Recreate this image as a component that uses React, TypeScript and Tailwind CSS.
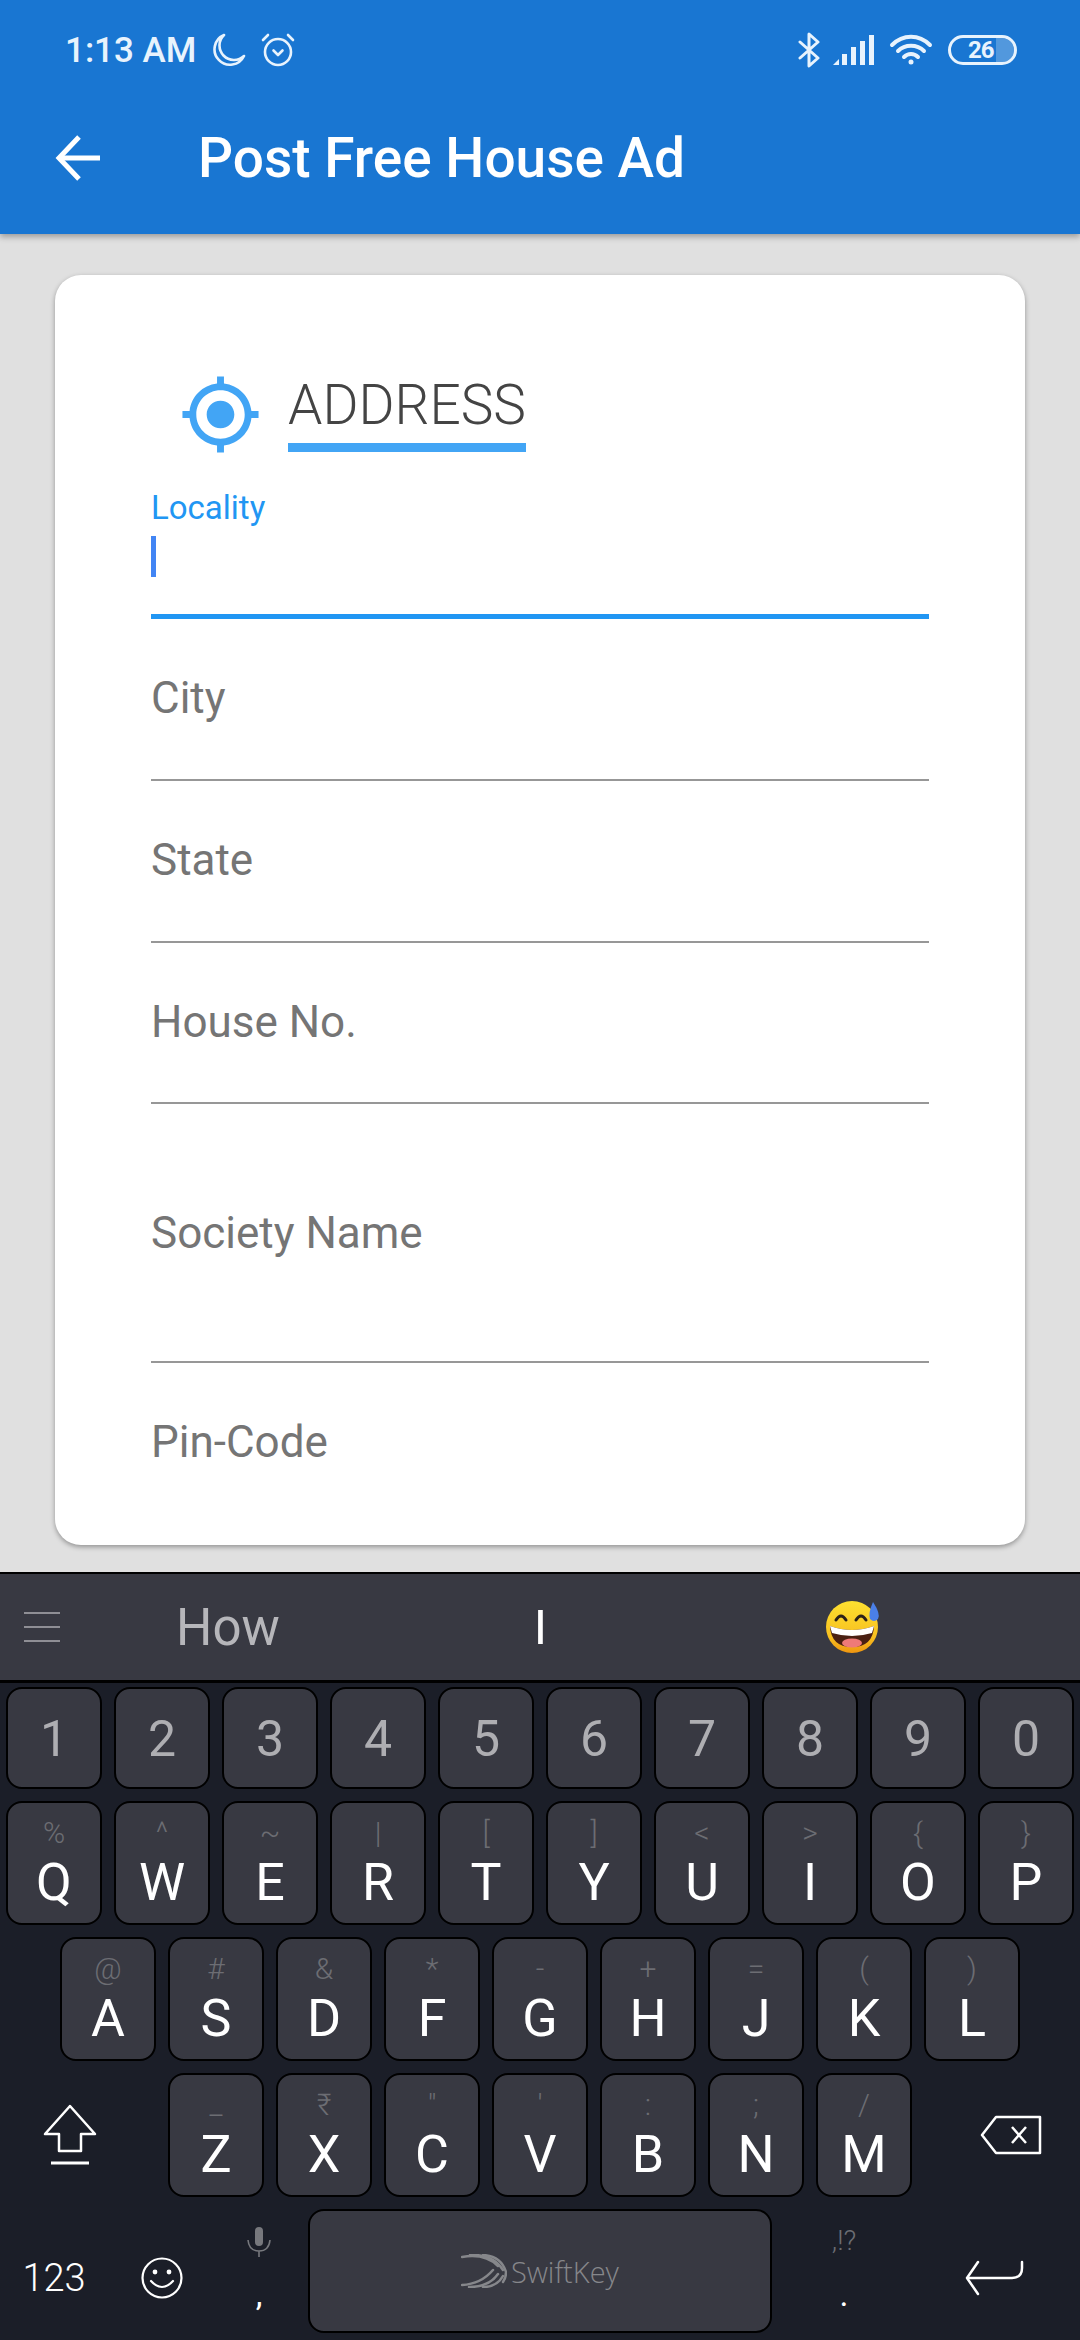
import React from "react";

const roboto = "font-['Roboto',sans-serif]";

function Key({ hint, label }: { hint: string; label: string }) {
  return (
    <div className="w-[96px] h-[124px] shrink-0 rounded-[16px] border-2 border-black bg-[#383942] flex flex-col items-center pt-[15px]">
      <div className="h-[39px] leading-[30px] text-[30px] font-light text-[#6c6d73]">{hint}</div>
      <div className="leading-[52px] text-[52px] text-white">{label}</div>
    </div>
  );
}

function NumKey({ n }: { n: string }) {
  return (
    <div className="w-[96px] h-[102px] shrink-0 rounded-[16px] border-2 border-black bg-[#383942] flex items-center justify-center pt-[2px]">
      <span className="text-[50px] leading-[50px] text-[#aeaeb2]">{n}</span>
    </div>
  );
}

function Field({ label, blockClass }: { label: string; blockClass: string }) {
  return (
    <div className={`border-b-[2px] border-[#979797] ${blockClass}`}>
      <div className="text-[44px] leading-[50px] text-[#757575]">{label}</div>
    </div>
  );
}

const row2: [string, string][] = [["%","Q"],["^","W"],["~","E"],["|","R"],["[","T"],["]","Y"],["<","U"],[">","I"],["{","O"],["}","P"]];
const row3: [string, string][] = [["@","A"],["#","S"],["&","D"],["*","F"],["-","G"],["+","H"],["=","J"],["(","K"],[")","L"]];
const row4: [string, string][] = [["_","Z"],["₹","X"],['"',"C"],["'","V"],[":","B"],[";","N"],["/","M"]];

export default function App() {
  return (
    <div className={`w-[1080px] h-[2340px] overflow-hidden flex flex-col bg-[#e0e0e0] ${roboto}`}>
      {/* Header */}
      <header className="h-[234px] shrink-0 bg-[#1976d2] shadow-[0_3px_6px_rgba(0,0,0,0.3)] relative z-10">
        <div className="h-[100px] pl-[65px] flex items-center text-[#e8f3fd]">
          <span className="text-[35px] font-medium leading-none w-[145px]">1:13 AM</span>
          <svg width="36" height="34" viewBox="0 0 36 34" fill="none" stroke="currentColor" strokeWidth="2.6" strokeLinejoin="round">
            <path d="M14 2 A15.5 15.5 0 1 0 34 23 A14 14 0 0 1 14 2 Z" />
          </svg>
          <svg className="ml-[14px]" width="36" height="36" viewBox="0 0 36 36" fill="none" stroke="currentColor" strokeWidth="2.6" strokeLinecap="round" strokeLinejoin="round">
            <circle cx="18" cy="20" r="13" />
            <path d="M3 8 L8 3 M33 8 L28 3" />
            <path d="M13.5 18.5 L18 23 L22.5 18.5" />
          </svg>
          <div className="ml-auto pr-[63px] flex items-center">
            <svg width="24" height="36" viewBox="0 0 24 36" fill="none" stroke="currentColor" strokeWidth="3" strokeLinejoin="round" strokeLinecap="round">
              <path d="M3 10 L21 26 L12 34 V2 L21 10 L3 26" />
            </svg>
            <svg className="ml-[12px]" width="42" height="30" viewBox="0 0 42 30" fill="currentColor">
              <polygon points="0,30 6,24 6,30" />
              <rect x="9" y="19" width="5" height="11" />
              <rect x="18" y="12" width="5" height="18" />
              <rect x="27" y="6" width="5" height="24" />
              <rect x="36" y="0" width="5" height="30" />
            </svg>
            <svg className="ml-[14px]" width="44" height="32" viewBox="0 0 44 32" fill="none" stroke="currentColor" strokeWidth="4" strokeLinecap="round">
              <path d="M3 11 C14 0 30 0 41 11" />
              <path d="M9 17 C16 10 28 10 35 17" />
              <path d="M15 23 C19 19 25 19 29 23" />
              <circle cx="22" cy="28" r="2.5" fill="currentColor" stroke="none" />
            </svg>
            <div className="ml-[15px] w-[69px] h-[30px] rounded-full border-[3px] border-[#e8f3fd] flex items-center relative overflow-hidden">
              <span className="ml-[17px] text-[24px] font-bold leading-none tracking-[-1px]">26</span>
              <div className="absolute right-0 top-0 bottom-0 w-[18px] bg-white/25 rounded-r-full" />
            </div>
          </div>
        </div>
        <div className="h-[116px] flex items-center">
          <svg className="ml-[55px]" width="46" height="46" viewBox="0 0 46 46" fill="none" stroke="white" strokeWidth="5">
            <path d="M45 23 H5" />
            <path d="M24 2 L4 23 L24 44" />
          </svg>
          <h1 className="ml-[97px] text-[55px] leading-none font-medium text-white">Post Free House Ad</h1>
        </div>
      </header>

      {/* Page body */}
      <main className="flex-1 min-h-0 px-[55px] pt-[41px] pb-[27px] flex flex-col">
        <div className="flex-1 min-h-0 bg-white rounded-[26px] shadow-[0_2px_5px_rgba(0,0,0,0.35)] pl-[96px] pr-[96px] pt-[98px] overflow-hidden">
          <div className="flex items-center pl-[28px]">
            <svg width="83" height="83" viewBox="0 0 24 24" fill="#42a5f5">
              <path d="M12 8c-2.21 0-4 1.79-4 4s1.79 4 4 4 4-1.79 4-4-1.79-4-4-4zm8.94 3c-.46-4.17-3.77-7.48-7.94-7.94V1h-2v2.06C6.83 3.52 3.52 6.83 3.06 11H1v2h2.06c.46 4.17 3.77 7.48 7.94 7.94V23h2v-2.06c4.17-.46 7.48-3.77 7.94-7.94H23v-2h-2.06zM12 19c-3.87 0-7-3.13-7-7s3.13-7 7-7 7 3.13 7 7-3.13 7-7 7z" />
            </svg>
            <div className="ml-[26px] border-b-[9px] border-[#42a5f5] pb-[10px] text-[55px] leading-[56px] font-light text-[#444444]">ADDRESS</div>
          </div>
          <div className="mt-[35px] border-b-[5px] border-[#2196f3] pb-[37px]">
            <div className="text-[33px] leading-[33px] text-[#2196f3]">Locality</div>
            <div className="mt-[12px] w-[5px] h-[41px] bg-[#4285f4]" />
          </div>
          <Field label="City" blockClass="pt-[54px] pb-[56px]" />
          <Field label="State" blockClass="pt-[54px] pb-[56px]" />
          <Field label="House No." blockClass="pt-[54px] pb-[55px]" />
          <Field label="Society Name" blockClass="pt-[104px] pb-[103px]" />
          <div className="pt-[54px] text-[44px] leading-[50px] text-[#757575]">Pin-Code</div>
        </div>
      </main>

      {/* Keyboard */}
      <section className="h-[768px] shrink-0 bg-[#1b1e28] border-t-2 border-black">
        <div className="h-[106px] bg-[#383942] border-b-[3px] border-black box-content flex items-center relative">
          <div className="ml-[24px] w-[36px] h-[30px] flex flex-col justify-between">
            <div className="h-[2px] bg-[#8f8f95]" />
            <div className="h-[2px] bg-[#8f8f95]" />
            <div className="h-[2px] bg-[#8f8f95]" />
          </div>
          <span className="ml-[116px] text-[51px] leading-none text-[#b6b6ba]">How</span>
          <span className="ml-[254px] text-[49px] leading-none text-white">I</span>
          <svg className="ml-[278px]" width="56" height="54" viewBox="0 0 56 54">
            <defs>
              <linearGradient id="emoji" x1="0" y1="0" x2="0" y2="1">
                <stop offset="0" stopColor="#fde030" />
                <stop offset="0.7" stopColor="#f8c020" />
                <stop offset="1" stopColor="#ee9510" />
              </linearGradient>
            </defs>
            <circle cx="27" cy="27" r="26" fill="url(#emoji)" />
            <path d="M11 20 Q16 12 21 20 M31 20 Q36 12 41 20" fill="none" stroke="#2b2118" strokeWidth="3" strokeLinecap="round" />
            <path d="M5 26 Q27 34 49 26 Q48 47 27 47 Q6 47 5 26 Z" fill="#4a2012" />
            <path d="M5 26 Q27 34 49 26 L47 33 Q27 39 7 33 Z" fill="#ffffff" />
            <ellipse cx="27" cy="43" rx="10" ry="4.5" fill="#ef7a78" />
            <path d="M48 2 Q56 14 53 19 Q49 23 45 19 Q43 13 48 2 Z" fill="#4a7fe8" />
          </svg>
        </div>

        <div className="pt-[4px] pb-[6px] flex flex-col gap-[12px]">
          <div className="pl-[6px] flex gap-[12px]">
            {["1","2","3","4","5","6","7","8","9","0"].map((n) => <NumKey key={n} n={n} />)}
          </div>
          <div className="pl-[6px] flex gap-[12px]">
            {row2.map(([h, l]) => <Key key={l} hint={h} label={l} />)}
          </div>
          <div className="pl-[60px] flex gap-[12px]">
            {row3.map(([h, l]) => <Key key={l} hint={h} label={l} />)}
          </div>
          <div className="flex items-center">
            <div className="w-[168px] pl-[42px] shrink-0">
              <svg width="56" height="62" viewBox="0 0 56 62" fill="none" stroke="white" strokeWidth="2.5" strokeLinejoin="round">
                <path d="M28 2 L3 30 H17 V47 H39 V30 H53 Z" />
                <path d="M9 59 H47" strokeWidth="3" />
              </svg>
            </div>
            <div className="flex gap-[12px]">
              {row4.map(([h, l]) => <Key key={l} hint={h} label={l} />)}
            </div>
            <div className="ml-[68px]">
              <svg width="62" height="40" viewBox="0 0 62 40" fill="none" stroke="white" strokeWidth="2.5" strokeLinejoin="round">
                <path d="M16 2 H60 V38 H16 L2 20 Z" />
                <path d="M32 12 L46 28 M46 12 L32 28" />
              </svg>
            </div>
          </div>
          <div className="h-[124px] flex">
            <div className="w-[108px] shrink-0 flex items-center justify-center pt-[14px]">
              <span className="text-[38px] leading-none font-light text-white">123</span>
            </div>
            <div className="w-[108px] shrink-0 flex items-center justify-center pt-[14px]">
              <svg width="42" height="42" viewBox="0 0 42 42" fill="none" stroke="white" strokeWidth="2.2" strokeLinecap="round">
                <circle cx="21" cy="21" r="19.5" />
                <path d="M10 24 Q21 36 32 24" />
                <circle cx="14" cy="15" r="2.4" fill="white" stroke="none" />
                <circle cx="28" cy="15" r="2.4" fill="white" stroke="none" />
              </svg>
            </div>
            <div className="w-[92px] shrink-0 flex flex-col items-center pt-[18px] pr-[6px]">
              <svg width="26" height="30" viewBox="0 0 26 30" fill="none">
                <rect x="9" y="0" width="8" height="19" rx="4" fill="#77787d" />
                <path d="M2 13 Q3 24 13 24 Q23 24 24 13 M13 24 V30" stroke="#77787d" strokeWidth="1.6" />
              </svg>
              <span className="mt-[20px] text-[34px] leading-[34px] text-white">,</span>
            </div>
            <div className="w-[464px] shrink-0 rounded-[16px] border-2 border-black bg-[#383942] flex items-center justify-center">
              <svg width="46" height="34" viewBox="0 0 46 34" fill="none" stroke="#86878b" strokeLinecap="round">
                <path d="M1 3 Q24 -1 37 12" strokeWidth="2.5" />
                <path d="M9 1 Q32 0 42 16" strokeWidth="2.5" />
                <path d="M22 1 Q40 2 45 18 Q45 24 42 28" strokeWidth="2.5" />
                <path d="M1 31 Q20 30 32 16" strokeWidth="2.5" />
                <path d="M8 33 Q28 33 37 20" strokeWidth="2.5" />
                <path d="M22 33 Q36 33 42 22" strokeWidth="2.5" />
              </svg>
              <span className="ml-[4px] text-[29px] leading-none font-['Open_Sans',sans-serif] font-light text-[#86878b]">SwiftKey</span>
            </div>
            <div className="w-[144px] shrink-0 flex flex-col items-center pt-[16px]">
              <span className="text-[28px] leading-[32px] font-light text-[#6c6d73]">,!?</span>
              <span className="mt-[20px] text-[34px] leading-[34px] text-white">.</span>
            </div>
            <div className="flex-1 flex items-center justify-start pt-[14px]">
              <svg className="ml-[49px]" width="60" height="36" viewBox="0 0 60 36" fill="none" stroke="white" strokeWidth="2.5" strokeLinejoin="round" strokeLinecap="round">
                <path d="M57 2 V8 Q57 18 47 18 H3" />
                <path d="M13 2 L2 18 L13 34" />
              </svg>
            </div>
          </div>
        </div>
      </section>
    </div>
  );
}
